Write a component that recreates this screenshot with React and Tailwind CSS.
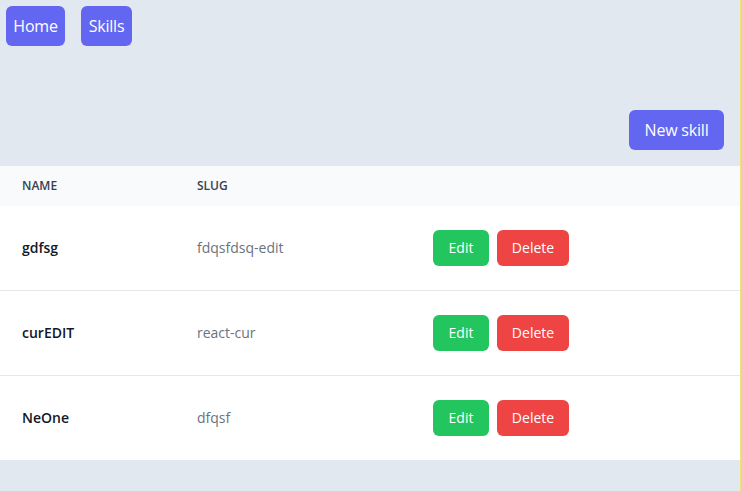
import { useState } from "react";

function App() {
  const [skills] = useState([
    { id: 1, name: "gdfsg", slug: "fdqsfdsq-edit" },
    { id: 2, name: "curEDIT", slug: "react-cur" },
    { id: 3, name: "NeOne", slug: "dfqsf" },
  ]);

  return (
    <div className="min-h-[491px] w-[741px] bg-[#e2e8f0] border-r border-[#f0e27a] font-['Open_Sans','Noto_Sans',sans-serif]">
      <nav className="flex gap-4 pl-[6px] pt-[6px]">
        <a className="flex h-[40px] w-[59px] items-center justify-center rounded-md bg-[#6366f1] text-base tracking-[-0.2px] text-white">
          Home
        </a>
        <a className="flex h-[40px] w-[51px] items-center justify-center rounded-md bg-[#6366f1] text-base tracking-[-0.2px] text-white">
          Skills
        </a>
      </nav>

      <div className="flex justify-end pr-[16px] pt-[64px] pb-[16px]">
        <button className="h-[40px] w-[95px] rounded-md bg-[#6366f1] text-base tracking-[-0.2px] text-white">
          New skill
        </button>
      </div>

      <table className="w-[740px] text-left">
        <thead className="bg-[#f9fafb]">
          <tr className="h-[40px]">
            <th className="w-[197px] pl-[22px] text-xs font-semibold uppercase text-[#374151]">
              Name
            </th>
            <th className="w-[236px] text-xs font-semibold uppercase text-[#374151]">
              Slug
            </th>
            <th></th>
          </tr>
        </thead>
        <tbody className="bg-white">
          {skills.map((skill, i) => (
            <tr
              key={skill.id}
              className={
                i === 0
                  ? "h-[84px] border-b border-[#e5e7eb]"
                  : i < skills.length - 1
                  ? "h-[85px] border-b border-[#e5e7eb]"
                  : "h-[85px]"
              }
            >
              <td className="pl-[22px] text-sm font-semibold text-[#111827]">
                {skill.name}
              </td>
              <td className="text-sm text-[#6b7280]">{skill.slug}</td>
              <td>
                <div className="flex gap-2">
                  <button className="h-[36px] w-[56px] rounded-md bg-[#22c55e] text-sm text-white">
                    Edit
                  </button>
                  <button className="h-[36px] w-[72px] rounded-md bg-[#ef4444] text-sm text-white">
                    Delete
                  </button>
                </div>
              </td>
            </tr>
          ))}
        </tbody>
      </table>
    </div>
  );
}

export default App;
